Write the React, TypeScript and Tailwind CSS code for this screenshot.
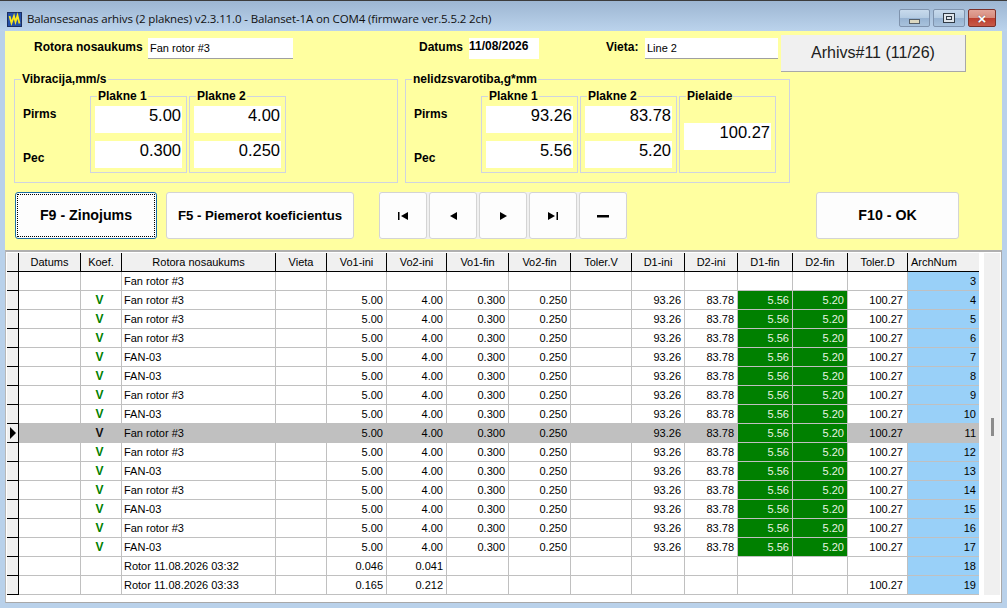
const FONT = "font-['Liberation_Sans',Arial,sans-serif]";

const GRID_COLS =
  "grid grid-cols-[12px_62px_41px_154px_51px_60px_60px_62px_62px_61px_53px_53px_55px_55px_60px_71px]";

const HEADERS = [
  "Datums",
  "Koef.",
  "Rotora nosaukums",
  "Vieta",
  "Vo1-ini",
  "Vo2-ini",
  "Vo1-fin",
  "Vo2-fin",
  "Toler.V",
  "D1-ini",
  "D2-ini",
  "D1-fin",
  "D2-fin",
  "Toler.D",
];

type Row = {
  num: number;
  name: string;
  koef?: boolean;
  empty?: boolean;
  vo1?: string;
  vo2?: string;
  tol?: boolean;
};

const ROWS: Row[] = [
  { num: 3, name: "Fan rotor #3", empty: true },
  { num: 4, name: "Fan rotor #3", koef: true },
  { num: 5, name: "Fan rotor #3", koef: true },
  { num: 6, name: "Fan rotor #3", koef: true },
  { num: 7, name: "FAN-03", koef: true },
  { num: 8, name: "FAN-03", koef: true },
  { num: 9, name: "Fan rotor #3", koef: true },
  { num: 10, name: "FAN-03", koef: true },
  { num: 11, name: "Fan rotor #3", koef: true },
  { num: 12, name: "Fan rotor #3", koef: true },
  { num: 13, name: "FAN-03", koef: true },
  { num: 14, name: "Fan rotor #3", koef: true },
  { num: 15, name: "FAN-03", koef: true },
  { num: 16, name: "Fan rotor #3", koef: true },
  { num: 17, name: "FAN-03", koef: true },
  { num: 18, name: "Rotor 11.08.2026 03:32", empty: true, vo1: "0.046", vo2: "0.041" },
  { num: 19, name: "Rotor 11.08.2026 03:33", empty: true, vo1: "0.165", vo2: "0.212", tol: true },
];

const ValueBox = ({ value }: { value: string }) => (
  <div className="h-[27px] w-[87px] bg-white pr-[1px] text-right text-[16.5px] leading-[19px] text-black">
    {value}
  </div>
);

const Plane = ({
  title,
  before,
  after,
}: {
  title: string;
  before: string;
  after: string;
}) => (
  <div className="relative flex h-[77px] w-[97px] flex-col gap-[8px] border border-[#d0d4e0] px-[4px] pt-[9px]">
    <span className="absolute -top-[8px] left-[6px] bg-[#ffffa0] px-[1px] text-[12px] leading-[14px] font-bold text-black">
      {title}
    </span>
    <ValueBox value={before} />
    <ValueBox value={after} />
  </div>
);

const GroupLabels = () => (
  <div className="flex h-[95px] w-[67px] flex-col justify-between pt-[27px] pb-[10px] text-[12px] leading-[14px] font-bold text-black">
    <span>Pirms</span>
    <span>Pec</span>
  </div>
);

const TextField = ({ value, className }: { value: string; className: string }) => (
  <div className={`h-[21px] border-b border-b-[#a0a0a0] bg-white pl-[2px] text-[11px] leading-[20px] text-black ${className}`}>
    {value}
  </div>
);

const BigButton = ({ children, className }: { children: React.ReactNode; className: string }) => (
  <button className={`flex h-[47px] items-center justify-center rounded-[3px] border border-[#d4d4d4] bg-[#fdfdfd] font-bold text-black ${className}`}>
    {children}
  </button>
);

const NavButton = ({ children }: { children: React.ReactNode }) => (
  <button className="flex h-[47px] w-[48px] items-center justify-center rounded-[3px] border border-[#d4d4d4] bg-[#fdfdfd]">
    <svg width="12" height="8" viewBox="0 0 12 8" fill="black">
      {children}
    </svg>
  </button>
);

const WinButton = ({
  children,
  className,
}: {
  children: React.ReactNode;
  className: string;
}) => (
  <div className={`flex h-[18px] items-center justify-center rounded-[2px] border ${className}`}>
    {children}
  </div>
);

const Cell = ({
  children,
  className = "",
  selected,
  alignRight = true,
}: {
  children?: React.ReactNode;
  className?: string;
  selected: boolean;
  alignRight?: boolean;
}) => (
  <div
    className={`h-[19px] truncate border-r border-b border-[#c0c0c0] px-[3px] text-[11px] leading-[19px] ${
      alignRight ? "text-right" : "text-left"
    } ${selected ? "bg-[#c0c0c0]" : ""} ${className}`}
  >
    {children}
  </div>
);

const DataRow = ({ row }: { row: Row }) => {
  const selected = row.num === 11;
  const filled = !row.empty;
  return (
    <div className={GRID_COLS}>
      <div className="relative flex h-[19px] items-center border-r border-b border-black bg-[#f0f0f0]">
        {selected ? (
          <svg width="8" height="12" viewBox="0 0 8 12" className="ml-[2px]" fill="black">
            <path d="M1 0 L7 6 L1 12 Z" />
          </svg>
        ) : null}
      </div>
      <Cell selected={selected} />
      <Cell
        selected={selected}
        alignRight={false}
        className={`pl-0 text-center text-[12px] font-bold ${selected ? "text-[#111]" : "text-[#008000]"}`}
      >
        <span className="block text-center">{row.koef ? "V" : ""}</span>
      </Cell>
      <Cell selected={selected} alignRight={false} className="pl-[2px]">
        {row.name}
      </Cell>
      <Cell selected={selected} />
      <Cell selected={selected}>{filled ? "5.00" : row.vo1}</Cell>
      <Cell selected={selected}>{filled ? "4.00" : row.vo2}</Cell>
      <Cell selected={selected}>{filled ? "0.300" : ""}</Cell>
      <Cell selected={selected}>{filled ? "0.250" : ""}</Cell>
      <Cell selected={selected} />
      <Cell selected={selected}>{filled ? "93.26" : ""}</Cell>
      <Cell selected={selected}>{filled ? "83.78" : ""}</Cell>
      {filled ? (
        <>
          <div className="h-[19px] border-r border-b border-[#c0c0c0] bg-[#008000] px-[3px] text-right text-[11px] leading-[19px] text-[#e8f4e0]">
            5.56
          </div>
          <div className="h-[19px] border-r border-b border-[#c0c0c0] bg-[#008000] px-[3px] text-right text-[11px] leading-[19px] text-[#e8f4e0]">
            5.20
          </div>
        </>
      ) : (
        <>
          <Cell selected={selected} />
          <Cell selected={selected} />
        </>
      )}
      <Cell selected={selected} className="pr-[4px]">
        {filled || row.tol ? "100.27" : ""}
      </Cell>
      <div
        className={`h-[19px] border-b border-[#c0c0c0] px-[3px] text-right text-[11px] leading-[19px] ${
          selected ? "bg-[#c0c0c0]" : "bg-[#99d0f8]"
        }`}
      >
        {row.num}
      </div>
    </div>
  );
};

export default function App() {
  return (
    <div className={`flex h-[608px] w-[1007px] flex-col overflow-hidden bg-[#b9d1ea] text-black ${FONT}`}>
      {/* title bar */}
      <div className="flex h-[31px] shrink-0 items-center border-t border-t-[#3c3c3c] bg-gradient-to-b from-[#9db6d2] to-[#bbd3ec] pt-[6px] pr-[11px] pl-[7px]">
        <svg width="15" height="15" viewBox="0 0 15 15" className="shrink-0">
          <rect x="0.5" y="0.5" width="14" height="14" fill="#2450a8" stroke="#1c2f60" />
          <path d="M2.5 4 L4.5 11 L7 4 L8.5 10 L10.5 3.5 L12.5 11.5" fill="none" stroke="#fbe81c" strokeWidth="1.8" />
        </svg>
        <span className="ml-[5px] font-['Open_Sans',sans-serif] text-[11.5px] leading-[16px] tracking-[-0.125px] text-[#101010]">
          Balansesanas arhivs (2 plaknes) v2.3.11.0 - Balanset-1A on COM4 (firmware ver.5.5.2 2ch)
        </span>
        <div className="mt-[-2px] ml-auto flex gap-[3px]">
          <WinButton className="w-[31px] border-[#7f93ad] bg-[linear-gradient(#c8daec_0%,#b4cbe2_50%,#97b3d2_52%,#a8c2dc_100%)]">
            <div className="mt-[6px] h-[5px] w-[11px] border border-[#56606a] bg-[#dcd8c0]" />
          </WinButton>
          <WinButton className="w-[32px] border-[#7f93ad] bg-[linear-gradient(#c8daec_0%,#b4cbe2_50%,#97b3d2_52%,#a8c2dc_100%)]">
            <div className="flex h-[10px] w-[12px] items-center justify-center border border-[#303a44] bg-[#dfe5ea]">
              <div className="h-[4px] w-[6px] border border-[#303a44]" />
            </div>
          </WinButton>
          <WinButton className="w-[28px] border-[#7c3028] bg-[linear-gradient(#e2a498_0%,#d68a7c_50%,#bd3f2f_52%,#c85a48_100%)]">
            <span className="text-[15px] leading-none font-bold text-white [text-shadow:0_0_1px_#402020]">×</span>
          </WinButton>
        </div>
      </div>

      {/* yellow form panel */}
      <div className="mx-[5px] flex h-[219px] shrink-0 flex-col bg-[#ffffa0] pl-[10px]">
        <div className="flex h-[48px] items-start">
          <span className="mt-[9px] ml-[19px] w-[114px] text-[12px] leading-[14px] font-bold">Rotora nosaukums</span>
          <TextField value="Fan rotor #3" className="mt-[7px] w-[145px]" />
          <span className="mt-[9px] ml-[126px] w-[50px] text-[12px] leading-[14px] font-bold">Datums</span>
          <div className="mt-[7px] h-[21px] w-[70px] bg-white pt-[1px] text-[12px] leading-[14px] font-bold">11/08/2026</div>
          <span className="mt-[9px] ml-[67px] w-[39px] text-[12px] leading-[14px] font-bold">Vieta:</span>
          <TextField value="Line 2" className="mt-[7px] w-[133px]" />
          <div className="mt-[4px] ml-[3px] flex h-[37px] w-[185px] items-center justify-center border-r border-b border-[#a8a8a8] bg-[#f0f0f0] text-[16px] text-[#202020]">
            Arhivs#11 (11/26)
          </div>
        </div>

        <div className="flex h-[103px] gap-[7px]">
          <section className="relative ml-[-1px] flex h-[104px] w-[384px] border border-[#d0d4e0] pl-[8px]">
            <span className="absolute -top-[8px] left-[6px] bg-[#ffffa0] px-[1px] text-[12px] leading-[14px] font-bold">
              Vibracija,mm/s
            </span>
            <GroupLabels />
            <div className="mt-[16px] flex gap-[2px]">
              <Plane title="Plakne 1" before="5.00" after="0.300" />
              <Plane title="Plakne 2" before="4.00" after="0.250" />
            </div>
          </section>
          <section className="relative flex h-[104px] w-[385px] border border-[#d0d4e0] pl-[8px]">
            <span className="absolute -top-[8px] left-[6px] bg-[#ffffa0] px-[1px] text-[12px] leading-[14px] font-bold">
              nelidzsvarotiba,g*mm
            </span>
            <GroupLabels />
            <div className="mt-[16px] flex gap-[2px]">
              <Plane title="Plakne 1" before="93.26" after="5.56" />
              <Plane title="Plakne 2" before="83.78" after="5.20" />
              <div className="relative h-[77px] w-[97px] border border-[#d0d4e0] px-[4px] pt-[26px]">
                <span className="absolute -top-[8px] left-[6px] bg-[#ffffa0] px-[1px] text-[12px] leading-[14px] font-bold">
                  Pielaide
                </span>
                <ValueBox value="100.27" />
              </div>
            </div>
          </section>
        </div>

        <div className="mt-[10px] flex items-start">
          <button className="flex h-[47px] w-[142px] items-center justify-center rounded-[3px] border border-[#1c6ea4] bg-[#fdfdfd] p-[1px]">
            <span className="flex h-full w-full items-center justify-center border border-dotted border-black text-[14.2px] font-bold">
              F9 - Zinojums
            </span>
          </button>
          <BigButton className="ml-[9px] w-[188px] text-[13.2px]">F5 - Piemerot koeficientus</BigButton>
          <div className="ml-[25px] flex gap-[2px] bg-[#f0f0f0]">
            <NavButton>
              <path d="M1 0 H2.5 V8 H1 Z M11 0 V8 L4 4 Z" />
            </NavButton>
            <NavButton>
              <path d="M10 0 V8 L3 4 Z" />
            </NavButton>
            <NavButton>
              <path d="M3 0 V8 L10 4 Z" />
            </NavButton>
            <NavButton>
              <path d="M1 0 V8 L8 4 Z M9.5 0 H11 V8 H9.5 Z" />
            </NavButton>
            <NavButton>
              <path d="M0 3 H12 V5.5 H0 Z" />
            </NavButton>
          </div>
          <BigButton className="ml-[189px] w-[143px] text-[14.2px]">F10 - OK</BigButton>
        </div>
      </div>

      {/* data grid */}
      <div className="relative mx-[5px] mb-[5px] flex min-h-0 flex-1 border-t-2 border-r border-b border-l border-t-[#b0b0b0] border-r-[#a8a8a8] border-b-[#a8a8a8] border-l-[#b8b8b8] bg-white pt-[1px] pl-[1px]">
        <div>
          <div className={GRID_COLS}>
            <div className="h-[19px] border-r border-b border-black bg-[#f0f0f0]" />
            {HEADERS.map((h) => (
              <div
                key={h}
                className="h-[19px] border-r border-b border-black bg-[#f0f0f0] text-center text-[11px] leading-[18px] text-black"
              >
                {h}
              </div>
            ))}
            <div className="h-[19px] border-b border-black bg-[#f0f0f0] pl-[3px] text-[11px] leading-[18px]">ArchNum</div>
          </div>
          {ROWS.map((row) => (
            <DataRow key={row.num} row={row} />
          ))}
        </div>
        <div className="mb-[7px] ml-[5px] w-[16px] bg-[#f0f0f0]" />
        {/* scrollbar thumb */}
        <div className="absolute top-[166px] left-[985px] h-[18px] w-[3px] bg-[#8c8c8c]" />
      </div>
    </div>
  );
}
